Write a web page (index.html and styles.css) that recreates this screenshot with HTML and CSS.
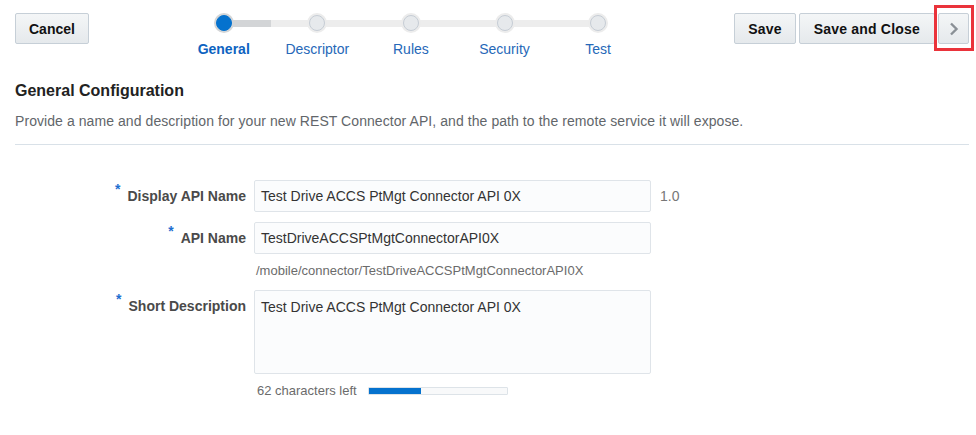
FILE: index.html
```html
<!DOCTYPE html>
<html>
<head>
<meta charset="utf-8">
<link rel="stylesheet" href="styles.css">
</head>
<body>
<div class="page">
  <div class="toolbar">
    <button class="btn">Cancel</button>
    <div class="train">
      <div class="step current">
        <div class="track"><span class="dot"></span></div>
        <div class="label">General</div>
      </div>
      <div class="step">
        <div class="track"><span class="dot"></span></div>
        <div class="label">Descriptor</div>
      </div>
      <div class="step">
        <div class="track"><span class="dot"></span></div>
        <div class="label">Rules</div>
      </div>
      <div class="step">
        <div class="track"><span class="dot"></span></div>
        <div class="label">Security</div>
      </div>
      <div class="step">
        <div class="track"><span class="dot"></span></div>
        <div class="label">Test</div>
      </div>
    </div>
    <div class="actions">
      <button class="btn save">Save</button>
      <button class="btn wide">Save and Close</button>
      <button class="btn next">
        <svg width="10" height="14" viewBox="0 0 10 14"><path d="M2 1.5 L7.5 7 L2 12.5" fill="none" stroke="#8a9096" stroke-width="2.4"/></svg>
        <span class="highlight"></span>
      </button>
    </div>
  </div>

  <h2 class="title">General Configuration</h2>
  <p class="intro">Provide a name and description for your new REST Connector API, and the path to the remote service it will expose.</p>
  <hr class="sep">

  <div class="form">
    <label class="flabel center"><span class="req">*</span>Display API Name</label>
    <div class="field"><div class="input">Test Drive ACCS PtMgt Connector API 0X</div></div>
    <div class="extra">1.0</div>

    <label class="flabel center row2"><span class="req">*</span>API Name</label>
    <div class="field row2"><div class="input">TestDriveACCSPtMgtConnectorAPI0X</div>
      <div class="hint">/mobile/connector/TestDriveACCSPtMgtConnectorAPI0X</div>
    </div>
    <div class="extra row2"></div>

    <label class="flabel top row3"><span class="req">*</span>Short Description</label>
    <div class="field row3">
      <div class="textarea">Test Drive ACCS PtMgt Connector API 0X</div>
      <div class="counter"><span>62 characters left</span><span class="meter"><span class="fill" style="width:38%"></span></span></div>
    </div>
    <div class="extra row3"></div>
  </div>
</div>
</body>
</html>
```

FILE: styles.css
```css
* { box-sizing: border-box; }
html, body { margin: 0; padding: 0; background: #fff; }
body { font-family: "Liberation Sans", Arial, sans-serif; color: #333; }
.page { padding: 13px 7px 0 15px; }

.toolbar { display: flex; align-items: flex-start; height: 68px; }
.btn {
  height: 31px; padding: 0 13px;
  font: bold 14px "Liberation Sans", Arial, sans-serif; color: #111;
  background: linear-gradient(#f4f6f7, #e5e9ec);
  border: 1px solid #c6cfd7; border-radius: 2px;
  display: inline-flex; align-items: center; justify-content: center;
}
.btn.wide { padding: 0 14px; letter-spacing: 0.2px; }
.btn.save { padding: 0 13px; letter-spacing: 0.2px; }
.actions { margin-left: auto; display: flex; gap: 3px; }
.btn.next { width: 31px; padding: 0; position: relative; }
.highlight {
  position: absolute; left: -5px; top: -9px; width: 40px; height: 46px;
  border: 3px solid #ea333b;
}

.train { display: flex; width: 468px; margin-left: 88px; }
.step { flex: 1; display: flex; flex-direction: column; align-items: center; }
.track { position: relative; width: 100%; height: 20px; display: flex; justify-content: center; align-items: center; }
.track::before, .track::after {
  content: ""; position: absolute; top: 7px; height: 7px; width: 50%; background: #ededed;
}
.track::before { left: 0; }
.track::after { left: 50%; }
.step:first-child .track::before, .step:last-child .track::after { display: none; }
.step.current .track::after { background: #d3d5d7; }
.dot {
  position: relative; z-index: 1; width: 20px; height: 20px; border-radius: 50%;
  background: #ececec; display: flex; align-items: center; justify-content: center;
}
.dot::after {
  content: ""; width: 14px; height: 14px; border-radius: 50%;
  background: #e6e9ec; border: 1px solid #c6cdd5;
}
.step.current .dot { background: #d3d5d7; }
.step.current .dot::after { background: #0572ce; border-color: #0572ce; }
.label { margin-top: 8px; font-size: 14px; line-height: 17px; color: #2668b8; }
.step.current .label { font-weight: bold; color: #0d63c1; }

.title { margin: 0; font-size: 16px; font-weight: bold; color: #222; line-height: 19px; }
.intro { margin: 13px 0 0; font-size: 14px; line-height: 17px; color: #62666a; letter-spacing: 0.07px; }
.sep { margin: 14px 0 0 0; border: 0; border-top: 1px solid #d9e1e8; height: 0; }

.form {
  display: grid; grid-template-columns: 231px 397px 1fr; column-gap: 8px;
  margin-top: 35px;
}
.flabel { font-size: 14px; font-weight: bold; color: #4a4a4a; text-align: right; line-height: 17px; }
.flabel.center { height: 32px; display: flex; align-items: center; justify-content: flex-end; }
.flabel.top { padding-top: 8px; }
.req { color: #1f6fd0; font-weight: bold; font-size: 14px; position: relative; top: -7px; margin-right: 7px; }
.row2 { margin-top: 10px; }
.row3 { margin-top: 11px; }
.input {
  height: 32px; border: 1px solid #dfe4e9; border-radius: 2px; background: #fbfcfd;
  padding: 0 6px; font-size: 14px; line-height: 30px; color: #333;
}
.hint { margin-top: 9px; font-size: 13px; line-height: 16px; color: #6b6b6b; padding-left: 2px; }
.extra { font-size: 14px; color: #777; height: 32px; line-height: 32px; padding-left: 1px; }
.textarea {
  height: 84px; border: 1px solid #dfe4e9; border-radius: 2px; background: #fbfcfd;
  padding: 8px 6px; font-size: 14px; line-height: 17px; color: #333;
}
.counter { margin-top: 9px; display: flex; align-items: center; gap: 11px; font-size: 13px; line-height: 16px; color: #6b6b6b; padding-left: 3px; }
.meter { width: 140px; height: 8px; border: 1px solid #dde3e8; background: #f8f9fa; display: block; border-radius: 1px; }
.fill { display: block; height: 100%; background: #0572ce; }
```
